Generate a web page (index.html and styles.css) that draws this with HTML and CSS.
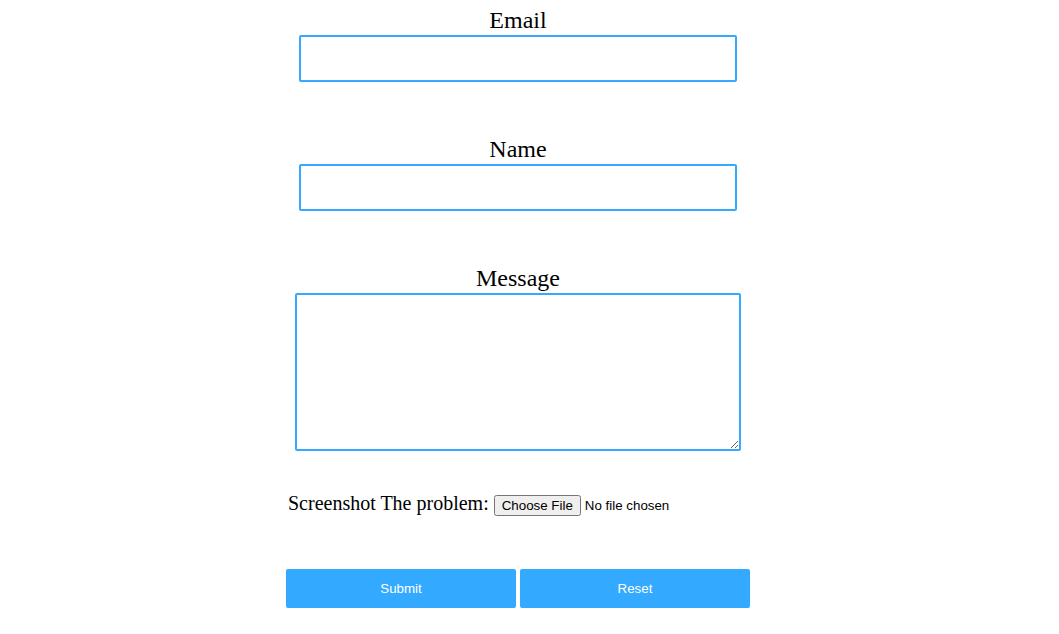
FILE: index.html
```html
<!DOCTYPE html>
<html lang="en">
<head>
<meta charset="utf-8">
<title>Contact</title>
<link rel="stylesheet" href="styles.css">
</head>
<body>
<form class="form">
  <div class="field">
    <label class="label" for="email">Email</label>
    <input class="input" id="email" type="email">
  </div>
  <div class="field">
    <label class="label" for="name">Name</label>
    <input class="input" id="name" type="text">
  </div>
  <div class="field field-last">
    <label class="label" for="message">Message</label>
    <textarea class="textarea" id="message"></textarea>
  </div>
  <div class="file-row">
    <label for="shot">Screenshot The problem:</label>
    <input id="shot" class="file" type="file">
  </div>
  <div class="actions">
    <button class="btn" type="submit">Submit</button>
    <button class="btn" type="reset">Reset</button>
  </div>
</form>
</body>
</html>
```
FILE: styles.css
```css
html, body {
  margin: 0;
  padding: 0;
  background: #ffffff;
}

body {
  font-family: "Liberation Serif", "Times New Roman", serif;
  color: #000000;
}

.form {
  width: 464px;
  margin-left: 286px;
  padding-top: 6px;
  display: flex;
  flex-direction: column;
}

.field {
  display: flex;
  flex-direction: column;
  align-items: center;
  margin-bottom: 53px;
}

.field-last {
  margin-bottom: 41px;
}

.label {
  font-size: 24px;
  line-height: 28px;
}

.input {
  box-sizing: border-box;
  width: 438px;
  height: 47px;
  margin-top: 1px;
  border: 2px solid #33aaff;
  border-radius: 2px;
  outline: none;
  padding: 0 8px;
  background: #ffffff;
}

.textarea {
  box-sizing: border-box;
  width: 446px;
  height: 158px;
  margin: 1px 0 0 0;
  border: 2px solid #33aaff;
  border-radius: 2px;
  outline: none;
  background: #ffffff;
}

.file-row {
  padding-left: 2px;
  font-size: 20px;
  line-height: 23px;
}

.file {
  font-family: Arial, "Liberation Sans", sans-serif;
  font-size: 13.333px;
}

.actions {
  display: flex;
  gap: 4px;
  margin-top: 53px;
}

.btn {
  width: 230px;
  height: 39px;
  border: none;
  border-radius: 2px;
  background: #33aaff;
  color: #ffffff;
  font-family: Arial, "Liberation Sans", sans-serif;
  font-size: 13.333px;
  padding: 0;
  cursor: pointer;
}
```
